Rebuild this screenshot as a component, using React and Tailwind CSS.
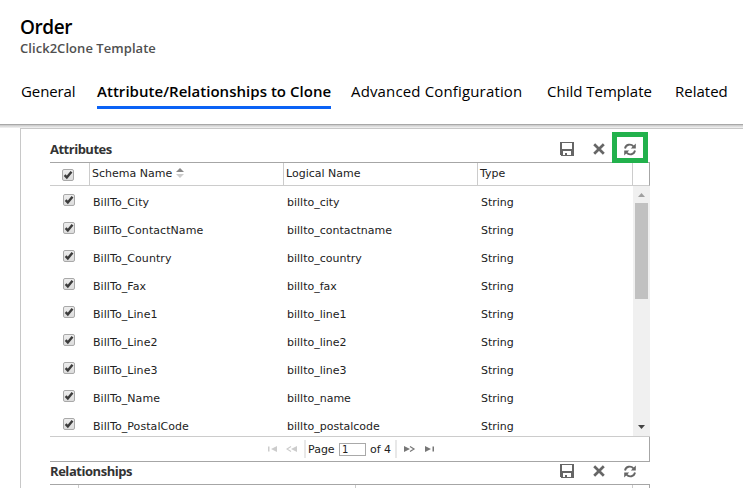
import React from "react";

const ROWS = [
  ["BillTo_City", "billto_city"],
  ["BillTo_ContactName", "billto_contactname"],
  ["BillTo_Country", "billto_country"],
  ["BillTo_Fax", "billto_fax"],
  ["BillTo_Line1", "billto_line1"],
  ["BillTo_Line2", "billto_line2"],
  ["BillTo_Line3", "billto_line3"],
  ["BillTo_Name", "billto_name"],
  ["BillTo_PostalCode", "billto_postalcode"],
];

function Check() {
  return (
    <span className="block h-3 w-3 shrink-0 rounded-[2px] border border-[#a9a9a9] bg-gradient-to-b from-[#ededed] to-[#dcdcdc]">
      <svg viewBox="0 0 10 10" className="block h-[10px] w-[10px]">
        <path d="M1.6 5.2 L3.8 7.4 L8.5 1.7" fill="none" stroke="#3c3c3c" strokeWidth="2.4" />
      </svg>
    </span>
  );
}

function SaveIcon() {
  return (
    <svg width="14" height="14" viewBox="0 0 14 14" shapeRendering="crispEdges">
      <path fill="#666" fillRule="evenodd" d="M0 0H14V14H1L0 13ZM2 1V7H12V1ZM3 9V13H5V11H7V13H11V9Z" />
    </svg>
  );
}

function CloseIcon() {
  return (
    <svg width="12" height="12" viewBox="0 0 12 12">
      <path d="M1.2 1.2L10.8 10.8M10.8 1.2L1.2 10.8" stroke="#666" strokeWidth="2.7" />
    </svg>
  );
}

function RefreshIcon() {
  return (
    <svg width="12" height="13" viewBox="0 0 12 13">
      <g fill="none" stroke="#666" strokeWidth="1.9">
        <path d="M1 5.5C1.8 1.5 6.8 0.3 9.4 3.3" />
        <path d="M11 7.5C10.2 11.5 5.2 12.7 2.6 9.7" />
      </g>
      <path d="M11.8 0.6V5.6H6.8ZM0.2 12.4V7.4H5.2Z" fill="#666" />
    </svg>
  );
}

function Toolbar({ title, highlighted }) {
  return (
    <div className="flex h-full items-center">
      <h2
        className={
          highlighted
            ? "whitespace-nowrap pt-[5px] font-['Open_Sans',sans-serif] text-[13px] font-bold tracking-[-0.5px] text-[#333]"
            : "whitespace-nowrap pt-[2px] font-['Open_Sans',sans-serif] text-[13px] font-bold tracking-[-0.45px] text-[#333]"
        }
      >
        {title}
      </h2>
      <div className="ml-auto flex items-center">
        <span className={highlighted ? "pt-[2px]" : ""}><SaveIcon /></span>
        <span className={highlighted ? "ml-[19px] pt-[2px]" : "ml-[19px]"}><CloseIcon /></span>
        <span
          className={
            highlighted
              ? "ml-[7px] mr-[2px] flex h-[31px] w-9 items-center justify-center border-[5px] border-[#22b14c] pt-[3px]"
              : "ml-[7px] mr-[2px] flex w-9 items-center justify-center"
          }
        >
          <RefreshIcon />
        </span>
      </div>
    </div>
  );
}

function Pager() {
  return (
    <div className="flex h-[24px] items-center border-r border-[#a6a6a6] pl-[218px]">
      <svg width="9" height="6" viewBox="0 0 9 6" fill="#ccc"><path d="M0 0.5H1.5V5.5H0ZM9 0V6L3 3Z" /></svg>
      <svg className="ml-[9px]" width="12" height="6" viewBox="0 0 12 6"><path d="M11 0V6L5 3Z" fill="#ccc" /><path d="M5 .5L1 3L5 5.5" fill="none" stroke="#ccc" strokeWidth="1.2" /></svg>
      <span className="ml-[6px] h-[18px] w-[2px] bg-[#e8e8e8]" />
      <span className="ml-[2px] w-[31px] pt-[2px]">Page</span>
      <span className="mt-px h-[13px] w-[27px] border border-[#a9a9a9] pl-[2px] text-[10px] leading-[12px]">1</span>
      <span className="ml-[4px] w-[25px] whitespace-nowrap pt-[2px]">of 4</span>
      <span className="h-[18px] w-[2px] bg-[#e8e8e8]" />
      <svg className="ml-[7px]" width="12" height="6" viewBox="0 0 12 6"><path d="M0 0V6L6 3Z" fill="#777" /><path d="M6 .5L10 3L6 5.5" fill="none" stroke="#777" strokeWidth="1.2" /></svg>
      <svg className="ml-[9px]" width="9" height="6" viewBox="0 0 9 6" fill="#777"><path d="M0 0V6L6 3ZM7.5 .5H9V5.5H7.5Z" /></svg>
    </div>
  );
}

export default function App() {
  return (
    <div className="flex h-[488px] w-[743px] flex-col overflow-hidden bg-white font-['DejaVu_Sans',Verdana,sans-serif] text-[11px] text-[#222]">
      <header className="h-[124px] shrink-0 font-['Open_Sans',sans-serif] text-black">
        <div className="pl-5 pt-[14px]">
          <h1 className="h-[25px] text-[19px] font-semibold leading-[26px] tracking-[-0.4px]">Order</h1>
          <p className="h-[18px] text-[13px] font-semibold leading-[18px] tracking-[0.05px] text-[#505050]">Click2Clone Template</p>
        </div>
        <nav className="flex h-[52px] whitespace-nowrap pl-[21px] pt-[23px] text-[15px] leading-[22px]">
          <span className="w-[76px] tracking-[-0.1px]">General</span>
          <span className="h-[29px] w-[234px] border-b-[3px] border-[#0b62f5] font-semibold tracking-[0.03px]">Attribute/Relationships to Clone</span>
          <span className="ml-5 w-[196px] tracking-[0.15px]">Advanced Configuration</span>
          <span className="w-[128px]">Child Template</span>
          <span>Related</span>
        </nav>
      </header>
      <div className="h-1 shrink-0 border-t border-[#a8a8a8] bg-gradient-to-b from-[#c8c8c8] to-[#f4f4f4]" />
      <main className="ml-5 flex grow flex-col border-l border-t border-[#c8c8c8] pl-[29px]">
        <section className="w-[600px]">
          <div className="h-[33px] pt-[4px]"><Toolbar title="Attributes" highlighted /></div>
          <div className="flex h-[24px] border-y border-r border-b-[#ccc] border-r-[#a6a6a6] border-t-[#a6a6a6] leading-[22px]">
            <div className="w-10 border-r border-[#ccc] pl-3 pt-[6px]"><Check /></div>
            <div className="flex w-[194px] border-r border-[#ccc] pl-[2px]">
              Schema Name
              <svg className="ml-[4px] mt-[5px]" width="8" height="10" viewBox="0 0 8 10"><path d="M0 4L4 0L8 4Z" fill="#888" /><path d="M0 6L4 10L8 6Z" fill="#ccc" /></svg>
            </div>
            <div className="w-[194px] border-r border-[#ccc] pl-[2px]">Logical Name</div>
            <div className="w-[155px] border-r border-[#ccc] pl-[2px]">Type</div>
          </div>
          <div className="flex h-[250px]">
            <div className="grow pt-px">
              {ROWS.map(([schema, logical]) => (
                <div key={schema} className="flex h-7 items-center">
                  <div className="w-[43px] pb-[2px] pl-[13px]"><Check /></div>
                  <div className="w-[194px] pt-[5px] tracking-[0.07px]">{schema}</div>
                  <div className="w-[194px] pt-[5px]">{logical}</div>
                  <div className="pt-[5px]">String</div>
                </div>
              ))}
            </div>
            <div className="flex w-[17px] shrink-0 flex-col items-center bg-[#f0f0f0]">
              <svg className="mt-[7px] shrink-0" width="7" height="4" viewBox="0 0 7 4"><path d="M0 4L3.5 0L7 4Z" fill="#a0a0a0" /></svg>
              <div className="mt-[6px] h-[96px] w-[13px] shrink-0 bg-[#c1c1c1]" />
              <svg className="mb-[7px] mt-auto shrink-0" width="7" height="4" viewBox="0 0 7 4"><path d="M0 0L3.5 4L7 0Z" fill="#444" /></svg>
            </div>
          </div>
          <div className="border-b border-t border-b-[#a6a6a6] border-t-[#ccc]"><Pager /></div>
        </section>
        <section className="w-[600px]">
          <div className="h-[22px] pb-[4px]"><Toolbar title="Relationships" /></div>
          <div className="flex h-6 border-r border-t border-[#a6a6a6]">
            <div className="w-[29px] border-r border-[#ccc]" />
            <div className="w-[277px] border-r border-[#ccc]" />
            <div className="w-[277px] border-r border-[#ccc]" />
          </div>
        </section>
      </main>
    </div>
  );
}
